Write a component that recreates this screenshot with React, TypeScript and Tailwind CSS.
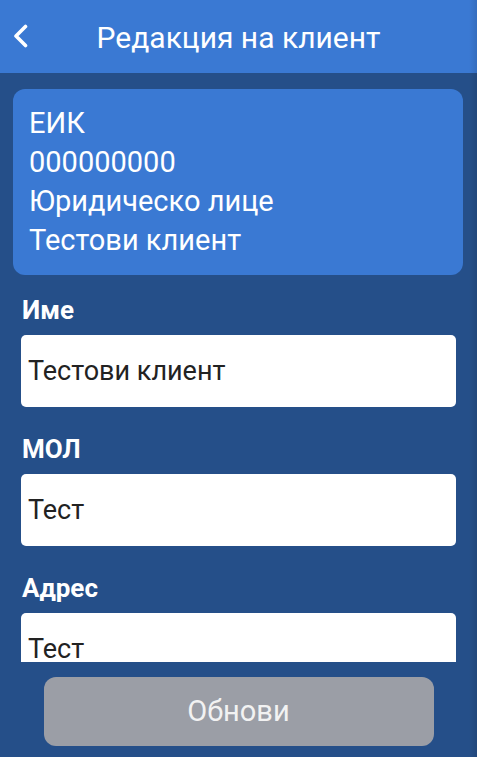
const fields = [
  { label: "Име", value: "Тестови клиент" },
  { label: "МОЛ", value: "Тест" },
  { label: "Адрес", value: "Тест" },
]

export default function App() {
  return (
    <div className="relative flex h-[757px] w-[477px] flex-col overflow-hidden bg-[#254f89] font-['Roboto',sans-serif]">
      {/* header */}
      <header className="relative flex h-[73px] shrink-0 items-center justify-center bg-[#3a79d3]">
        <button className="absolute left-[11px] top-[24px] text-white">
          <svg width="18" height="24" viewBox="0 0 18 24" fill="none">
            <path d="M14.5 2.5 L5 12 L14.5 21.5" stroke="currentColor" strokeWidth="3.6" strokeLinecap="round" strokeLinejoin="round" />
          </svg>
        </button>
        <h1 className="pt-[2px] text-[30px] font-normal text-white">Редакция на клиент</h1>
      </header>

      <main className="flex-1 overflow-hidden">
        <div className="pl-[13px] pr-[14px] pt-[16px]">
          <div className="rounded-[12px] bg-[#3a79d3] px-[16px] py-[15px] text-[29px] leading-[39px] text-white">
            <div>ЕИК</div>
            <div>000000000</div>
            <div>Юридическо лице</div>
            <div>Тестови клиент</div>
          </div>
        </div>

        <div className="flex flex-col gap-[26px] px-[21px] pt-[19px]">
          {fields.map((f) => (
            <div key={f.label}>
              <div className="mb-[9px] pl-[1px] text-[26px] font-bold leading-[32px] text-white">{f.label}</div>
              <div className="flex h-[72px] items-center rounded-[5px] bg-white px-[7px] text-[27px] text-[#222]">
                {f.value}
              </div>
            </div>
          ))}
        </div>
      </main>

      {/* footer */}
      <footer className="flex h-[95px] shrink-0 justify-center pt-[15px]">
        <button className="h-[69px] w-[390px] rounded-[12px] bg-[#9b9ea6] text-[29px] text-[#f2f2f2]">
          Обнови
        </button>
      </footer>

      <div className="pointer-events-none absolute inset-y-0 right-0 w-[8px] bg-gradient-to-r from-transparent to-black/10" />
    </div>
  )
}
